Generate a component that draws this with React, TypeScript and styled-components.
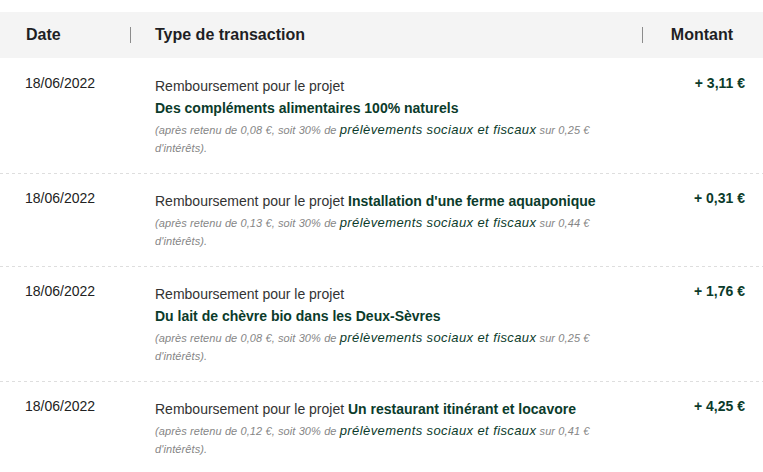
import React from 'react';
import styled, { createGlobalStyle } from 'styled-components';

const GlobalStyle = createGlobalStyle`
  body {
    margin: 0;
    background: #ffffff;
    font-family: 'Liberation Sans', Arial, sans-serif;
    color: #222222;
  }
`;

const GREEN = '#0b3b2b';

const Table = styled.div`
  margin-top: 12px;
  width: 763px;
`;

const Grid = styled.div`
  display: grid;
  grid-template-columns: 130px 512px 1fr;
`;

const HeaderRow = styled(Grid)`
  height: 46px;
  align-items: center;
  background: #f4f4f4;
`;

const HeaderCell = styled.div<{ $align?: 'left' | 'right'; $divider?: boolean }>`
  font-size: 16px;
  font-weight: 700;
  color: #1f1f24;
  padding: ${({ $align }) => ($align === 'right' ? '0 30px 0 0' : '0 0 0 24px')};
  text-align: ${({ $align }) => $align ?? 'left'};
  border-left: ${({ $divider }) => ($divider ? '1px solid #8c8c8c' : 'none')};
  line-height: 16px;

  &:first-child {
    padding-left: 26px;
  }
`;

const Row = styled(Grid)`
  padding: 14px 0 16px;
  background-image: linear-gradient(to right, #dedede 50%, transparent 50%);
  background-size: 6px 1px;
  background-repeat: repeat-x;
  background-position: left top;

  &:first-of-type {
    background-image: none;
  }
`;

const DateCell = styled.div`
  padding-left: 25px;
  font-size: 14px;
  line-height: 22px;
  color: #222222;
`;

const TypeCell = styled.div`
  padding: 3px 24px 0 25px;
  font-size: 14px;
  line-height: 22px;
  color: #333333;
`;

const ProjectName = styled.span`
  display: inline-block;
  font-weight: 700;
  color: ${GREEN};
`;

const Note = styled.p`
  margin: 2px 0 0;
  font-size: 11px;
  line-height: 18px;
  font-style: italic;
  letter-spacing: 0.1px;
  color: #868686;
`;

const NoteLink = styled.span`
  font-size: 13px;
  letter-spacing: 0.4px;
  color: ${GREEN};
`;

const AmountCell = styled.div`
  padding-right: 18px;
  text-align: right;
  font-size: 14px;
  line-height: 22px;
  font-weight: 700;
  color: ${GREEN};
`;

type Transaction = {
  date: string;
  project: string;
  retenu: string;
  base: string;
  amount: string;
};

const TRANSACTIONS: Transaction[] = [
  {
    date: '18/06/2022',
    project: 'Des compléments alimentaires 100% naturels',
    retenu: '0,08',
    base: '0,25',
    amount: '+ 3,11 €',
  },
  {
    date: '18/06/2022',
    project: "Installation d'une ferme aquaponique",
    retenu: '0,13',
    base: '0,44',
    amount: '+ 0,31 €',
  },
  {
    date: '18/06/2022',
    project: 'Du lait de chèvre bio dans les Deux-Sèvres',
    retenu: '0,08',
    base: '0,25',
    amount: '+ 1,76 €',
  },
  {
    date: '18/06/2022',
    project: 'Un restaurant itinérant et locavore',
    retenu: '0,12',
    base: '0,41',
    amount: '+ 4,25 €',
  },
];

export default function App(): JSX.Element {
  return (
    <>
      <GlobalStyle />
      <Table>
        <HeaderRow>
          <HeaderCell>Date</HeaderCell>
          <HeaderCell $divider>Type de transaction</HeaderCell>
          <HeaderCell $divider $align='right'>
            Montant
          </HeaderCell>
        </HeaderRow>

        <div>
          {TRANSACTIONS.map((tx) => (
            <Row key={tx.project}>
              <DateCell>{tx.date}</DateCell>
              <TypeCell>
                Remboursement pour le projet <ProjectName>{tx.project}</ProjectName>
                <Note>
                  (après retenu de {tx.retenu} €, soit 30% de{' '}
                  <NoteLink>prélèvements sociaux et fiscaux</NoteLink> sur {tx.base} €
                  d'intérêts).
                </Note>
              </TypeCell>
              <AmountCell>{tx.amount}</AmountCell>
            </Row>
          ))}
        </div>
      </Table>
    </>
  );
}
